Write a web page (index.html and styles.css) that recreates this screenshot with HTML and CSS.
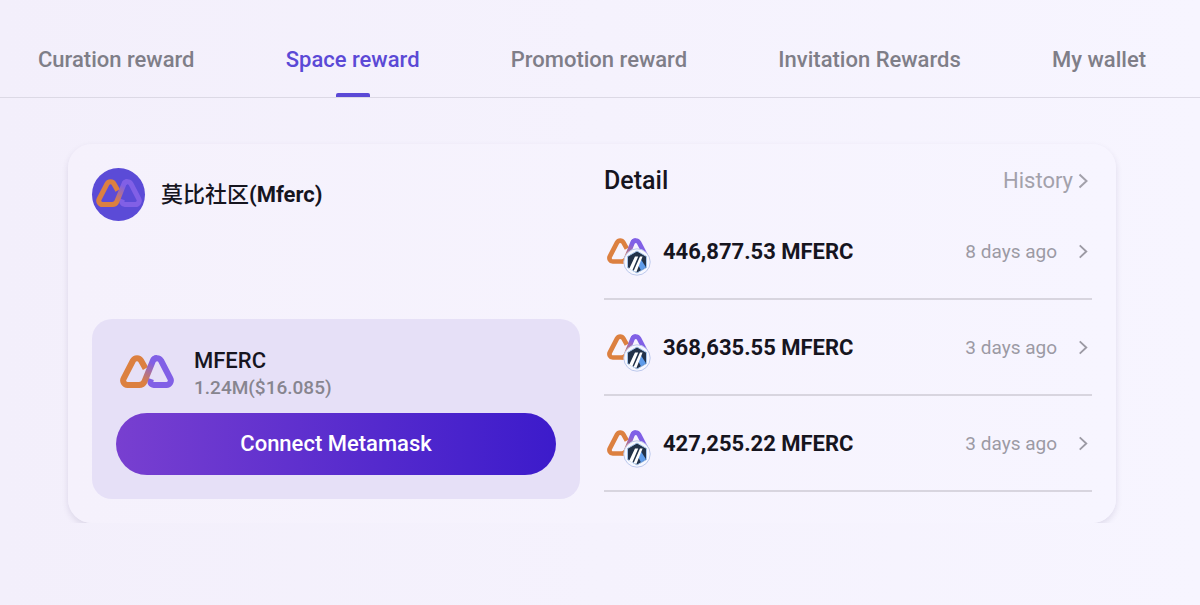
FILE: index.html
```html
<!DOCTYPE html>
<html lang="en">
<head>
<meta charset="utf-8">
<meta name="viewport" content="width=device-width, initial-scale=1">
<title>Space reward</title>
<link rel="stylesheet" href="styles.css">
</head>
<body>
<svg class="defs" aria-hidden="true">
  <defs>
    <linearGradient id="loop" gradientUnits="userSpaceOnUse" x1="23" y1="27" x2="34" y2="9">
      <stop offset="0" stop-color="#dc8040"/>
      <stop offset="1" stop-color="#8160e6"/>
    </linearGradient>
    <symbol id="mferc" viewBox="0 0 54 33">
      <g fill="none" stroke-width="6" stroke-linejoin="round">
        <path stroke="#8160e6" d="M33 5.5A4.6 4.6 0 0 1 41 5.5L50.3 23.5A4.4 4.4 0 0 1 46.5 30H34Q29 29.5 31 24"/>
        <path stroke="#dc8040" d="M25.5 13.5L21 5.5A4.6 4.6 0 0 0 13 5.5L3.7 23.5A4.4 4.4 0 0 0 7.5 30H20"/>
        <path stroke="url(#loop)" d="M19 30Q23 30 24.5 26.5L33 5.5A4.6 4.6 0 0 1 37 3"/>
      </g>
    </symbol>
    <symbol id="arbitrum" viewBox="0 0 28 28">
      <circle cx="14" cy="14" r="13.2" fill="#f7f8ff" stroke="#bcc8ec"/>
      <path d="M14 3L23.5 8.5V19.5L14 25L4.5 19.5V8.5Z" fill="#223249" stroke="#a5c4ea" stroke-linejoin="round"/>
      <path d="M18 11.5L23 19.3L18 22.5L15.5 17.5Z" fill="#5f9cea"/>
      <path d="M12 8.5H15.2L9.2 22.7L6.2 20.8ZM17 8.5H19.6L13.4 24L10.6 23Z" fill="#fff"/>
    </symbol>
    <symbol id="chevron" viewBox="0 0 10 16">
      <path d="M1.5 1.5L8.5 8L1.5 14.5" fill="none" stroke="currentColor" stroke-width="2"/>
    </symbol>
  </defs>
</svg>

<nav class="tabs">
  <a class="tab" href="#curation">Curation reward</a>
  <a class="tab active" href="#space" aria-current="page">Space reward</a>
  <a class="tab" href="#promotion">Promotion reward</a>
  <a class="tab" href="#invitation">Invitation Rewards</a>
  <a class="tab" href="#wallet">My wallet</a>
</nav>

<main class="content">
  <article class="card">
    <section class="space">
      <header class="community">
        <span class="avatar"><svg class="avatar-logo"><use href="#mferc"/></svg></span>
        <h1 class="community-name">莫比社区<b>(Mferc)</b></h1>
      </header>
      <div class="balance">
        <div class="token">
          <svg class="token-logo"><use href="#mferc"/></svg>
          <div>
            <div class="token-name">MFERC</div>
            <div class="token-value">1.24M($16.085)</div>
          </div>
        </div>
        <button class="connect" type="button">Connect Metamask</button>
      </div>
    </section>

    <section class="detail">
      <header class="detail-head">
        <h2 class="detail-title">Detail</h2>
        <a class="history" href="#history">History<svg class="chevron"><use href="#chevron"/></svg></a>
      </header>
      <ul class="rows">
        <li><a class="row" href="#reward-1">
          <span class="coin"><svg class="coin-logo"><use href="#mferc"/></svg><svg class="coin-badge"><use href="#arbitrum"/></svg></span>
          <span class="amount">446,877.53 MFERC</span>
          <span class="age">8 days ago</span>
          <svg class="chevron small"><use href="#chevron"/></svg>
        </a></li>
        <li><a class="row" href="#reward-2">
          <span class="coin"><svg class="coin-logo"><use href="#mferc"/></svg><svg class="coin-badge"><use href="#arbitrum"/></svg></span>
          <span class="amount">368,635.55 MFERC</span>
          <span class="age">3 days ago</span>
          <svg class="chevron small"><use href="#chevron"/></svg>
        </a></li>
        <li><a class="row" href="#reward-3">
          <span class="coin"><svg class="coin-logo"><use href="#mferc"/></svg><svg class="coin-badge"><use href="#arbitrum"/></svg></span>
          <span class="amount">427,255.22 MFERC</span>
          <span class="age">3 days ago</span>
          <svg class="chevron small"><use href="#chevron"/></svg>
        </a></li>
      </ul>
    </section>
  </article>
</main>
</body>
</html>
```
FILE: styles.css
```css
* {
  box-sizing: border-box;
}

body {
  margin: 0;
  min-height: 100vh;
  background: linear-gradient(90deg, #f3effb, #f7f5ff);
  color: #16151f;
  font-family: Roboto, "Noto Sans CJK SC", sans-serif;
}

a {
  color: inherit;
  text-decoration: none;
}

.defs {
  position: absolute;
  width: 0;
  height: 0;
}

.tabs {
  display: flex;
  justify-content: space-between;
  padding: 24px 54px 0 38px;
  border-bottom: 1px solid #dcd9e5;
}

.tab {
  position: relative;
  padding: 20px 0 21px;
  color: #7f7e88;
  font-size: 22px;
  font-weight: 500;
  line-height: 32px;
  white-space: nowrap;
}

.tab.active {
  color: #5b49d6;
}

.tab.active::after {
  content: "";
  position: absolute;
  bottom: 0;
  left: 50%;
  width: 34px;
  height: 4px;
  margin-left: -17px;
  border-radius: 2px 2px 0 0;
  background: #5b49d6;
}

.content {
  padding: 46px 84px 0 68px;
  overflow: hidden;
}

.card {
  display: grid;
  grid-template-columns: 1fr 1fr;
  gap: 24px;
  padding: 24px;
  border-radius: 24px;
  background: linear-gradient(90deg, #f5f1fc, #f7f5ff);
  box-shadow: 0 3px 6px rgba(60, 50, 100, 0.13);
}

.space {
  display: flex;
  flex-direction: column;
  justify-content: space-between;
}

.community {
  display: flex;
  align-items: center;
  gap: 16px;
}

.avatar {
  display: grid;
  place-items: center;
  width: 53px;
  height: 53px;
  border-radius: 50%;
  background: #5b4bd7;
}

.avatar-logo {
  width: 46px;
  height: 28px;
  margin-bottom: 4px;
}

.community-name {
  margin: 0;
  font-size: 22px;
  font-weight: 500;
  line-height: 32px;
}

.balance {
  padding: 24px;
  border-radius: 20px;
  background: #e6e0f7;
}

.token {
  display: flex;
  align-items: center;
  gap: 20px;
  padding: 4px 4px 12px;
}

.token-logo {
  width: 54px;
  height: 33px;
  margin-bottom: 6px;
}

.token-name {
  font-size: 22px;
  font-weight: 500;
  line-height: 28px;
}

.token-value {
  color: #87858f;
  font-size: 19px;
  font-weight: 500;
  line-height: 26px;
}

.connect {
  display: block;
  width: 100%;
  padding: 15px;
  border: 0;
  border-radius: 31px;
  background: linear-gradient(90deg, #783fd0, #3c1bcb);
  color: #fff;
  font: 500 22px/32px Roboto, sans-serif;
}

.detail {
  padding-bottom: 7px;
}

.detail-head {
  display: flex;
  align-items: center;
  justify-content: space-between;
  padding-bottom: 10px;
}

.detail-title {
  margin: 0;
  font-size: 25px;
  font-weight: 500;
  line-height: 26px;
}

.history {
  display: flex;
  align-items: center;
  gap: 5px;
  padding-right: 4px;
  color: #a3a1ab;
  font-size: 22px;
  line-height: 26px;
}

.chevron {
  width: 10px;
  height: 16px;
}

.chevron.small {
  width: 10px;
  height: 15px;
  margin: 0 4px 0 21px;
}

.rows {
  margin: 0;
  padding: 0;
  list-style: none;
}

.row {
  display: flex;
  align-items: center;
  height: 96px;
  border-bottom: 2px solid #d8d5df;
  color: #9c9aa4;
}

.coin {
  position: relative;
  padding: 0 14px 0 3px;
}

.coin-logo {
  display: block;
  width: 42px;
  height: 26px;
}

.coin-badge {
  position: absolute;
  top: 10px;
  left: 19px;
  width: 28px;
  height: 28px;
}

.amount {
  flex: 1;
  color: #16151f;
  font-size: 22px;
  font-weight: 700;
}

.age {
  font-size: 19px;
}
```
